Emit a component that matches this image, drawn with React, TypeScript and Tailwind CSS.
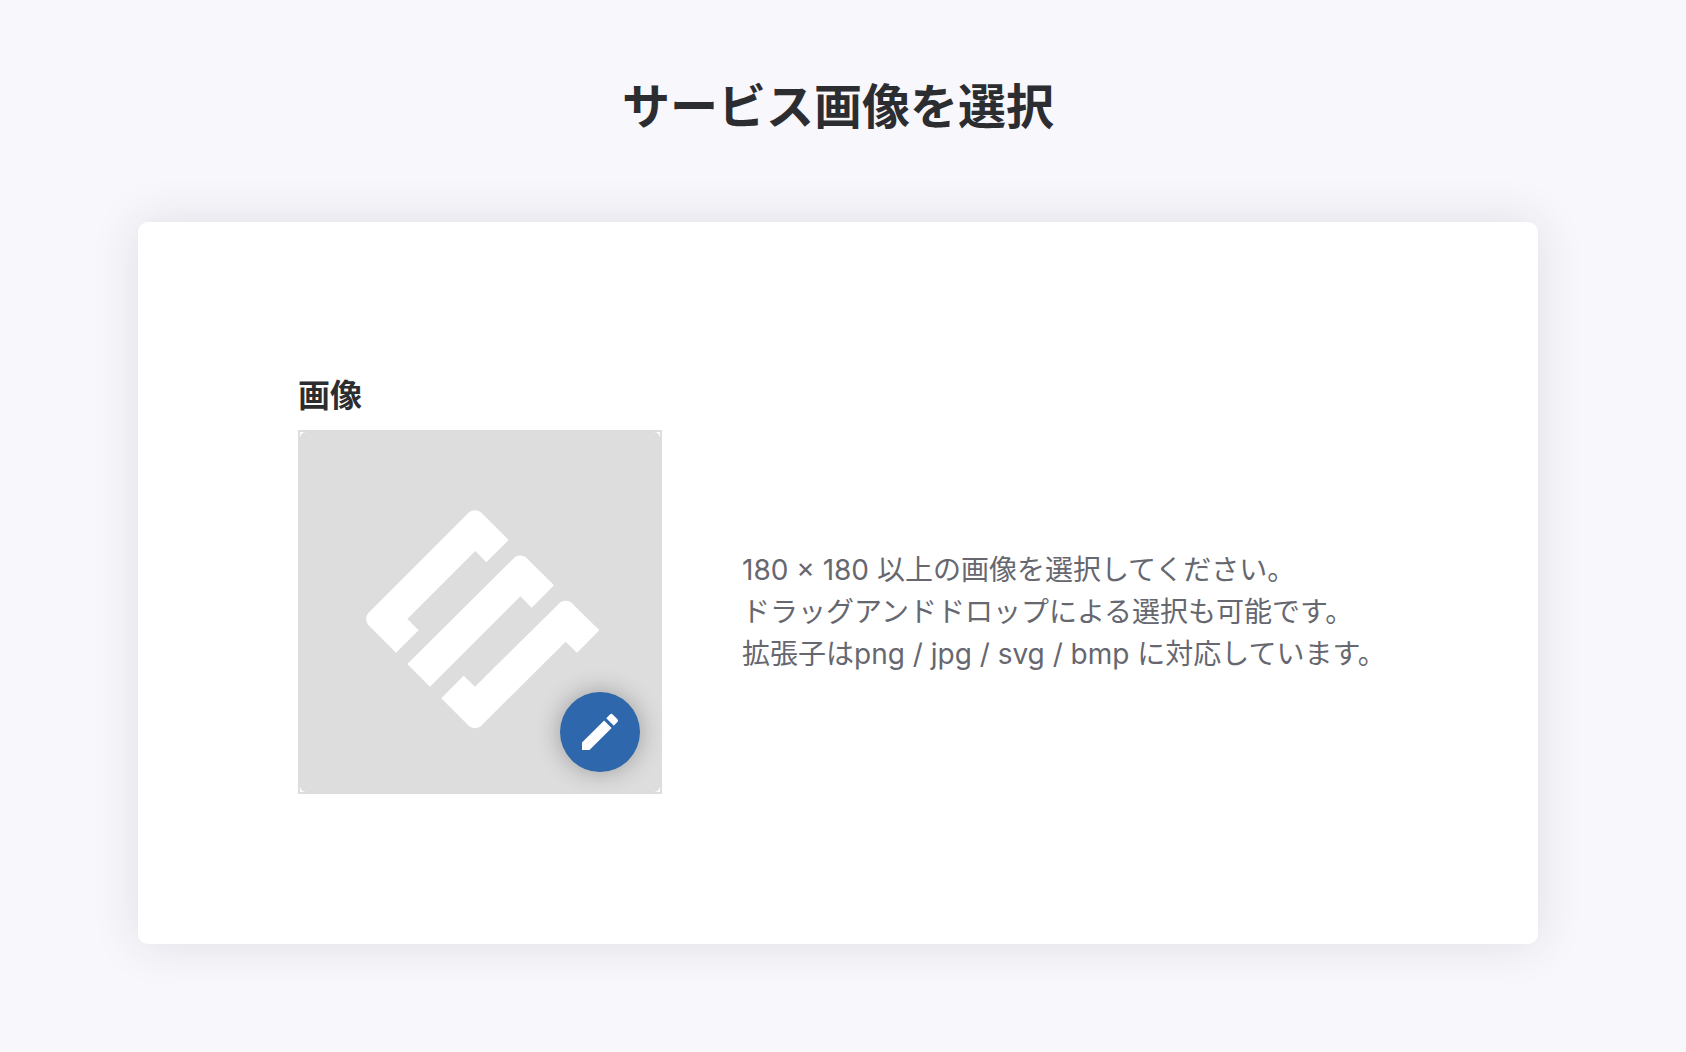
import { useRef, useState } from "react";
import { MdEdit } from "react-icons/md";

const guideLines = [
  "180 × 180 以上の画像を選択してください。",
  "ドラッグアンドドロップによる選択も可能です。",
  "拡張子はpng / jpg / svg / bmp に対応しています。",
];

function PlaceholderLogo() {
  return (
    <svg viewBox="-150 -174 1080 1080" className="block h-full w-full" fill="#fff" aria-hidden="true">
      <path d="M476 150 409 217 376 183 172 387 206 421 138 488 58 408A28 28 0 0 1 58 366L354 70A28 28 0 0 1 396 70Z" />
      <path d="M612 286 545 353 511 319 240 590 172 522 490 206A28 28 0 0 1 532 206Z" />
      <path d="M748 421 681 488 647 455 396 705A28 28 0 0 1 354 705L274 625 341 557 375 590 626 342A28 28 0 0 1 668 342Z" />
    </svg>
  );
}

function ImagePicker() {
  const inputRef = useRef<HTMLInputElement>(null);
  const [preview, setPreview] = useState<string | null>(null);

  const selectFile = (file?: File) => {
    if (file) setPreview(URL.createObjectURL(file));
  };

  return (
    <div
      className="relative size-[364px] shrink-0 border-2 border-[#ddd]"
      onDragOver={(e) => e.preventDefault()}
      onDrop={(e) => {
        e.preventDefault();
        selectFile(e.dataTransfer.files[0]);
      }}
    >
      <div className="h-full w-full overflow-hidden rounded-md bg-[#ddd]">
        {preview ? (
          <img src={preview} alt="" className="h-full w-full object-cover" />
        ) : (
          <PlaceholderLogo />
        )}
      </div>
      <input
        ref={inputRef}
        id="service-image"
        type="file"
        accept=".png,.jpg,.svg,.bmp"
        className="hidden"
        onChange={(e) => selectFile(e.target.files?.[0])}
      />
      <button
        type="button"
        aria-labelledby="service-image-label"
        onClick={() => inputRef.current?.click()}
        className="absolute right-5 bottom-5 flex size-20 cursor-pointer items-center justify-center rounded-full bg-[#2e67ab] text-white shadow-[0_0_24px_rgba(0,0,0,0.3)]"
      >
        <MdEdit className="size-12" />
      </button>
    </div>
  );
}

export default function App() {
  return (
    <main className="min-h-screen bg-[#f8f7fc] pt-[71px] pr-2.5 pb-[108px] font-[Inter,'Noto_Sans_CJK_JP',sans-serif] text-[#2c2d31]">
      <h1 className="text-center text-5xl leading-[71px] font-bold">サービス画像を選択</h1>

      <section className="mx-auto mt-20 max-w-[1400px] rounded-[10px] bg-white px-40 py-[150px] shadow-[0_0_48px_rgba(44,45,49,0.12)]">
        <label
          id="service-image-label"
          htmlFor="service-image"
          className="mb-2.5 block text-[32px] leading-[48px] font-bold"
        >
          画像
        </label>
        <div className="flex items-center gap-20">
          <ImagePicker />
          <p className="text-[28px] leading-[42px] text-[#66676f]">
            {guideLines.map((line) => (
              <span key={line} className="block whitespace-nowrap">
                {line}
              </span>
            ))}
          </p>
        </div>
      </section>
    </main>
  );
}
